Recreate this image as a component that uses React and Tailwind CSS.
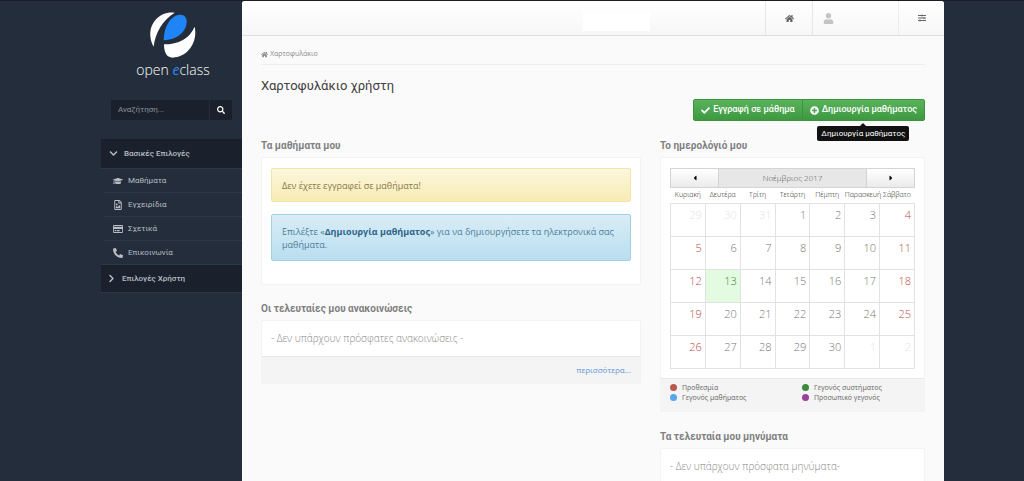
import {
  FaHome, FaSearch, FaChevronDown, FaChevronRight, FaGraduationCap, FaRegFileImage,
  FaRegCreditCard, FaPhoneAlt, FaCheck, FaPlusCircle, FaUser, FaSlidersH, FaCaretLeft, FaCaretRight,
} from "react-icons/fa";

const LINKS = [
  { label: "Μαθήματα", Icon: FaGraduationCap },
  { label: "Εγχειρίδια", Icon: FaRegFileImage },
  { label: "Σχετικά", Icon: FaRegCreditCard },
  { label: "Επικοινωνία", Icon: FaPhoneAlt },
];
const DAYS = ["Κυριακή", "Δευτέρα", "Τρίτη", "Τετάρτη", "Πέμπτη", "Παρασκευή", "Σάββατο"];
const WEEKS = [
  [29, 30, 31, 1, 2, 3, 4],
  [5, 6, 7, 8, 9, 10, 11],
  [12, 13, 14, 15, 16, 17, 18],
  [19, 20, 21, 22, 23, 24, 25],
  [26, 27, 28, 29, 30, 1, 2],
];
const LEGEND = [
  { label: "Προθεσμία", dot: "bg-[#bb5850]" },
  { label: "Γεγονός συστήματος", dot: "bg-[#3a8a42]" },
  { label: "Γεγονός μαθήματος", dot: "bg-[#5ba4ee]" },
  { label: "Προσωπικό γεγονός", dot: "bg-[#9a419c]" },
];

function Logo() {
  return (
    <a href="#" className="flex flex-col items-center pt-[11px] pl-[3px]">
      <svg viewBox="0 0 138 138" className="size-[46px]" aria-hidden="true">
        <path d="M74 2C28-3-2 34 1 72c1 14 5 24 10 32C16 62 38 24 74 2Z" fill="#fff" />
        <path d="M41 85C42 40 64 8 92 8c12 0 19 10 18 24-2 28-29 51-69 53Z" fill="#1f84f5" />
        <path d="M42 97c44 0 77-18 92-53 10 46-20 92-66 93-19 0-26-17-26-40Z" fill="#fff" />
      </svg>
      <span className="mt-[2px] text-[14px] leading-[20px] font-light text-white">
        open <span className="font-medium text-[#2b8af0] italic">e</span>class
      </span>
    </a>
  );
}

function Sidebar() {
  return (
    <aside className="flex w-[141px] shrink-0 flex-col font-['Roboto',sans-serif]">
      <div className="font-['Open_Sans',sans-serif]"><Logo /></div>
      <form className="mt-[20px] ml-[10px] flex h-5 w-[121px] bg-[#1a212c]">
        <input
          type="text"
          aria-label="Αναζήτηση"
          placeholder="Αναζήτηση..."
          className="min-w-0 flex-1 px-[7px] text-[8px] text-white outline-none placeholder:text-[#8b919a]"
        />
        <button type="button" aria-label="Αναζήτηση" className="flex w-[23px] items-center justify-center border-l border-[#232c39] text-white">
          <FaSearch className="size-2" />
        </button>
      </form>
      <nav className="mt-[19px] text-[8px] leading-3 text-[#b9bdc3]">
        <button type="button" className="flex h-[29px] w-full items-center gap-[6px] bg-[#1a212c] pl-2 font-medium">
          <FaChevronDown className="size-[9px]" />
          Βασικές Επιλογές
        </button>
        <ul className="border-t border-[#2e3947]">
          {LINKS.map(({ label, Icon }) => (
            <li key={label} className="ml-[3px] border-b border-[#2e3947] last:border-b-0">
              <a href="#" className="flex h-[23px] items-center gap-[5px] pl-[9px]">
                <Icon className="size-[10px]" />
                {label}
              </a>
            </li>
          ))}
        </ul>
        <button type="button" className="flex h-[29px] w-full items-center gap-[6px] border-y border-[#2e3947] bg-[#1a212c] pl-[6px] font-medium">
          <FaChevronRight className="size-[9px]" />
          Επιλογές Χρήστη
        </button>
      </nav>
    </aside>
  );
}

function TopBar() {
  return (
    <header className="flex h-[35px] justify-end rounded-t-[3px] border-b border-[#dfdfdf] bg-gradient-to-b from-white to-[#f7f7f7] text-[#666]">
      <div className="mt-[10px] mr-auto ml-[341px] h-5 w-[67px] bg-white" />
      <a href="#" aria-label="Αρχική" className="flex w-[47px] items-center justify-center border-l border-[#e6e6e6]">
        <FaHome className="size-[9px]" />
      </a>
      <button type="button" aria-label="Χρήστης" className="flex w-[86px] items-center border-l border-[#e6e6e6] pl-[10px] text-[#c4c4c4]">
        <FaUser className="size-[11px]" />
      </button>
      <button type="button" aria-label="Ρυθμίσεις" className="flex w-[46px] items-center justify-center border-l border-[#ededed]">
        <FaSlidersH className="size-2" />
      </button>
    </header>
  );
}

function Section({ title, children }) {
  return (
    <section>
      <h2 className="mb-[4px] font-['Roboto',sans-serif] text-[10px] leading-[14px] font-bold text-[#808080]">{title}</h2>
      <div className="rounded-[2px] border border-[#f3f3f3] bg-white">{children}</div>
    </section>
  );
}

function cellColour(week, col) {
  const day = WEEKS[week][col];
  if ((week === 0 && day > 20) || (week === 4 && day < 10)) return "text-[#e8e4e4]";
  if (day === 13) return "bg-[#e3fbe0] text-[#3c8a3c]";
  if (col === 0 || col === 6) return "text-[#bd4a4a]";
  return "text-[#777]";
}

function Calendar() {
  return (
    <>
      <div className="px-[9px] pt-[10px] pb-[9px]">
        <div className="flex h-[20px] border border-[#d4d4d4] bg-[#e7e7e7]">
          <button type="button" aria-label="Προηγούμενος μήνας" className="flex w-12 items-center justify-center border-r border-[#d4d4d4] bg-gradient-to-b from-white to-[#ebebeb] text-black">
            <FaCaretLeft className="size-2" />
          </button>
          <span className="flex-1 text-center text-[8px] leading-[18px] font-light text-[#555]">Νοέμβριος 2017</span>
          <button type="button" aria-label="Επόμενος μήνας" className="flex w-12 items-center justify-center border-l border-[#d4d4d4] bg-gradient-to-b from-white to-[#ebebeb] text-black">
            <FaCaretRight className="size-2" />
          </button>
        </div>
        <table className="w-full table-fixed border-collapse">
          <thead>
            <tr className="h-[15px]">
              {DAYS.map((d) => (
                <th key={d} scope="col" className="p-0 text-center text-[7px] font-light whitespace-nowrap text-[#222]">{d}</th>
              ))}
            </tr>
          </thead>
          <tbody>
            {WEEKS.map((week, w) => (
              <tr key={w} className="h-[33px]">
                {week.map((day, c) => (
                  <td key={c} className={`border border-[#e2e2e2] pt-[3px] pr-[3px] text-right align-top text-[11px] leading-4 font-light ${cellColour(w, c)}`}>{day}</td>
                ))}
              </tr>
            ))}
          </tbody>
        </table>
      </div>
      <ul className="grid grid-cols-2 gap-x-[10px] border-t border-[#e8e8e8] bg-[#f4f4f4] pt-[4px] pb-[8px] pl-[9px]">
        {LEGEND.map(({ label, dot }) => (
          <li key={label} className="flex items-center gap-[5px] text-[7px] leading-[10px] text-[#666]">
            <span className={`size-[7px] rounded-full ${dot}`} />
            {label}
          </li>
        ))}
      </ul>
    </>
  );
}

function Actions() {
  const button = "flex h-[22px] items-center gap-[3px] border border-[#3b933f] bg-gradient-to-b from-[#58b35b] to-[#3d9941] px-[7px] text-[9px] font-medium whitespace-nowrap text-white";
  return (
    <div className="mt-[4px] flex justify-end font-['Roboto',sans-serif]">
      <button type="button" className={`${button} rounded-l-[2px]`}>
        <FaCheck className="size-[9px]" />
        Εγγραφή σε μάθημα
      </button>
      <div className="relative -ml-px">
        <button type="button" className={`${button} rounded-r-[2px]`}>
          <FaPlusCircle className="size-[9px]" />
          Δημιουργία μαθήματος
        </button>
        <div role="tooltip" className="absolute top-full left-1/2 mt-[2px] flex -translate-x-1/2 flex-col items-center">
          <span className="border-x-[3px] border-b-[3px] border-x-transparent border-b-[#111]" />
          <span className="rounded-[2px] bg-[#111] px-[4px] text-[8px] leading-[15px] whitespace-nowrap text-white">Δημιουργία μαθήματος</span>
        </div>
      </div>
    </div>
  );
}

export default function App() {
  return (
    <div className="min-h-screen border-t border-[#191b2a] bg-[#232d3b] font-['Open_Sans',sans-serif]">
      <div className="flex pr-[80px] pl-[101px]">
        <Sidebar />
        <main className="min-w-0 flex-1 rounded-t-[3px] bg-[#fafafa]">
          <TopBar />
          <div className="px-[19px]">
            <nav className="flex h-[29px] items-center gap-[2px] border-b border-[#eee] pt-[8px] text-[7px] text-[#8c8c8c]">
              <FaHome className="size-[7px]" />
              Χαρτοφυλάκιο
            </nav>
            <h1 className="mt-[12px] font-['Roboto',sans-serif] text-[13px] leading-[18px] text-[#404040]">Χαρτοφυλάκιο χρήστη</h1>
            <Actions />
            <div className="mt-[18px] flex gap-[19px]">
              <div className="flex min-w-0 flex-1 flex-col gap-[17px]">
                <Section title="Τα μαθήματα μου">
                  <div className="flex flex-col gap-3 px-[9px] pt-[10px] pb-[23px] text-[9px] leading-[13px]">
                    <p className="rounded-[2px] border border-[#f2e5a6] bg-gradient-to-b from-[#fcf6dc] to-[#f7ecb5] px-[10px] pt-[10px] pb-[9px] text-[#8a7748]">Δεν έχετε εγγραφεί σε μαθήματα!</p>
                    <p className="rounded-[2px] border border-[#a3cfe3] bg-gradient-to-b from-[#d9edf7] to-[#b9def0] px-[10px] pt-[10px] pb-[9px] text-[#4c7d98]">
                      Επιλέξτε «<b className="text-[#2c6488]">Δημιουργία μαθήματος</b>» για να δημιουργήσετε τα ηλεκτρονικά σας μαθήματα.
                    </p>
                  </div>
                </Section>
                <Section title="Οι τελευταίες μου ανακοινώσεις">
                  <p className="px-[9px] py-[9px] text-[10px] leading-[17px] font-light text-[#888]">- Δεν υπάρχουν πρόσφατες ανακοινώσεις -</p>
                  <div className="border-t border-[#e8e8e8] bg-[#f4f4f4] px-[9px] py-[7px] text-right text-[8px] leading-3">
                    <a href="#" className="text-[#5c93d6]">περισσότερα...</a>
                  </div>
                </Section>
              </div>
              <div className="flex w-[265px] shrink-0 flex-col gap-[18px]">
                <Section title="Το ημερολόγιό μου"><Calendar /></Section>
                <Section title="Τα τελευταία μου μηνύματα">
                  <p className="px-[9px] py-[9px] text-[10px] leading-[17px] font-light text-[#888]">- Δεν υπάρχουν πρόσφατα μηνύματα-</p>
                </Section>
              </div>
            </div>
          </div>
        </main>
      </div>
    </div>
  );
}
